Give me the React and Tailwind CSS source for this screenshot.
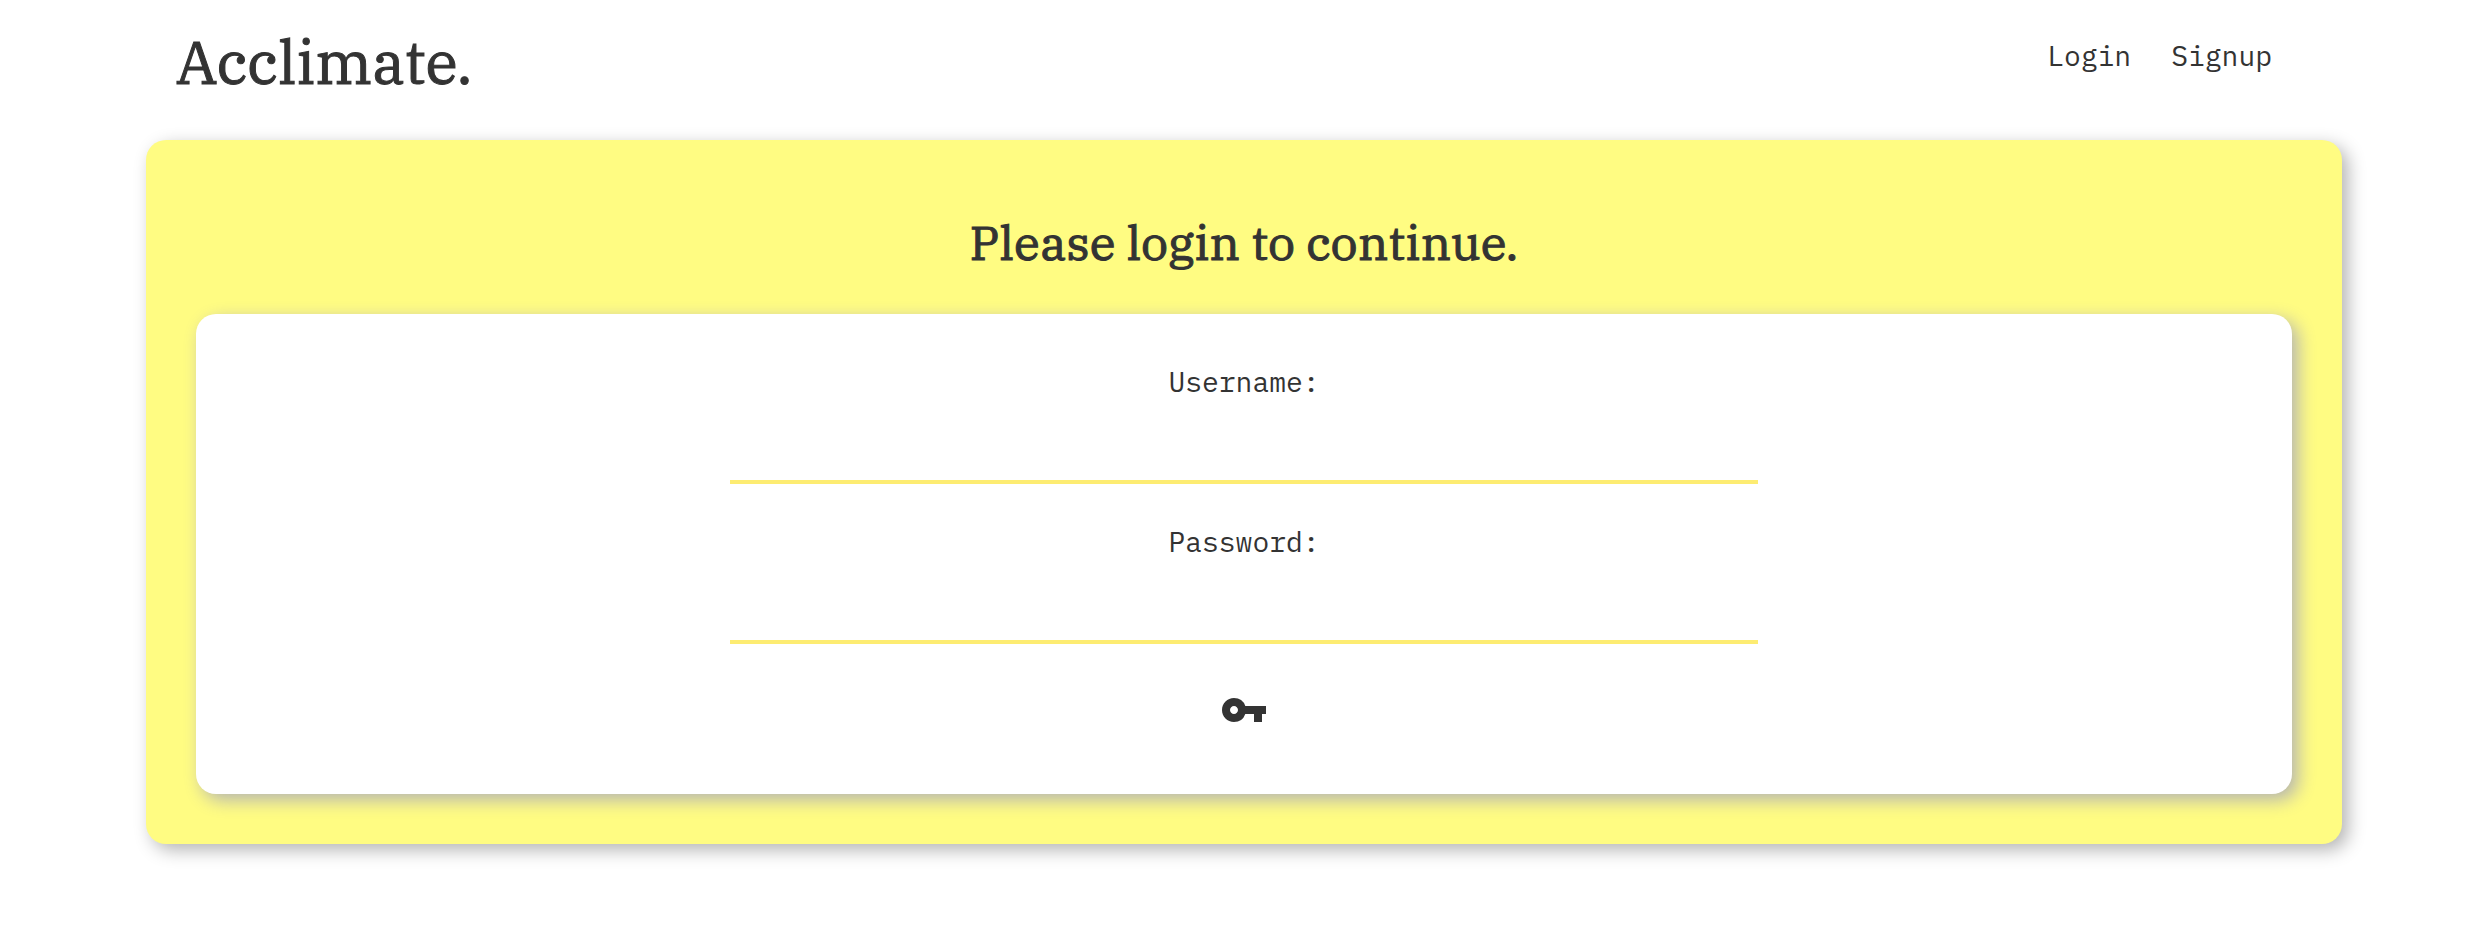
import { MdVpnKey } from "react-icons/md";

const serif =
  "font-['IBM_Plex_Serif','DejaVu_Serif_Condensed','DejaVu_Serif',serif] font-normal [-webkit-text-stroke:1px_#333333]";
const panel = "rounded-[20px] shadow-[6px_6px_18px_#b4b4b4]";

function Field({ id, label, type, autoComplete }) {
  return (
    <div className="flex w-full flex-col items-center">
      <label htmlFor={id} className="leading-9">
        {label}
      </label>
      <input
        id={id}
        name={id}
        type={type}
        autoComplete={autoComplete}
        className="mt-4 h-[68px] w-[49%] border-b-4 border-[#fdec72] bg-transparent text-center outline-none"
      />
    </div>
  );
}

export default function App() {
  return (
    <div className="min-h-screen bg-white pr-[134px] pl-[146px] font-['IBM_Plex_Mono','Liberation_Mono',monospace] text-[28px] text-[#333333]">
      <header className="flex h-[140px] items-start justify-between pr-[70px] pl-[30px]">
        <h1 className={`${serif} pt-[22px] text-[60px] leading-20`}>
          <a href="#home">Acclimate.</a>
        </h1>
        <nav className="flex gap-10 pt-[38px] leading-9">
          <a href="#login">Login</a>
          <a href="#signup">Signup</a>
        </nav>
      </header>
      <main className={`${panel} bg-[#fffc82] px-[50px] pt-[67px] pb-[50px]`}>
        <h2 className={`${serif} text-center text-[48px] leading-[70px]`}>
          Please login to continue.
        </h2>
        <form
          className={`${panel} mt-[37px] flex flex-col items-center gap-10 bg-white pt-[50px] pb-[60px]`}
          onSubmit={(event) => event.preventDefault()}
        >
          <Field id="username" label="Username:" type="text" autoComplete="username" />
          <Field id="password" label="Password:" type="password" autoComplete="current-password" />
          <button type="submit" aria-label="Log in" className="mt-0.5 cursor-pointer">
            <MdVpnKey className="size-12" />
          </button>
        </form>
      </main>
    </div>
  );
}
